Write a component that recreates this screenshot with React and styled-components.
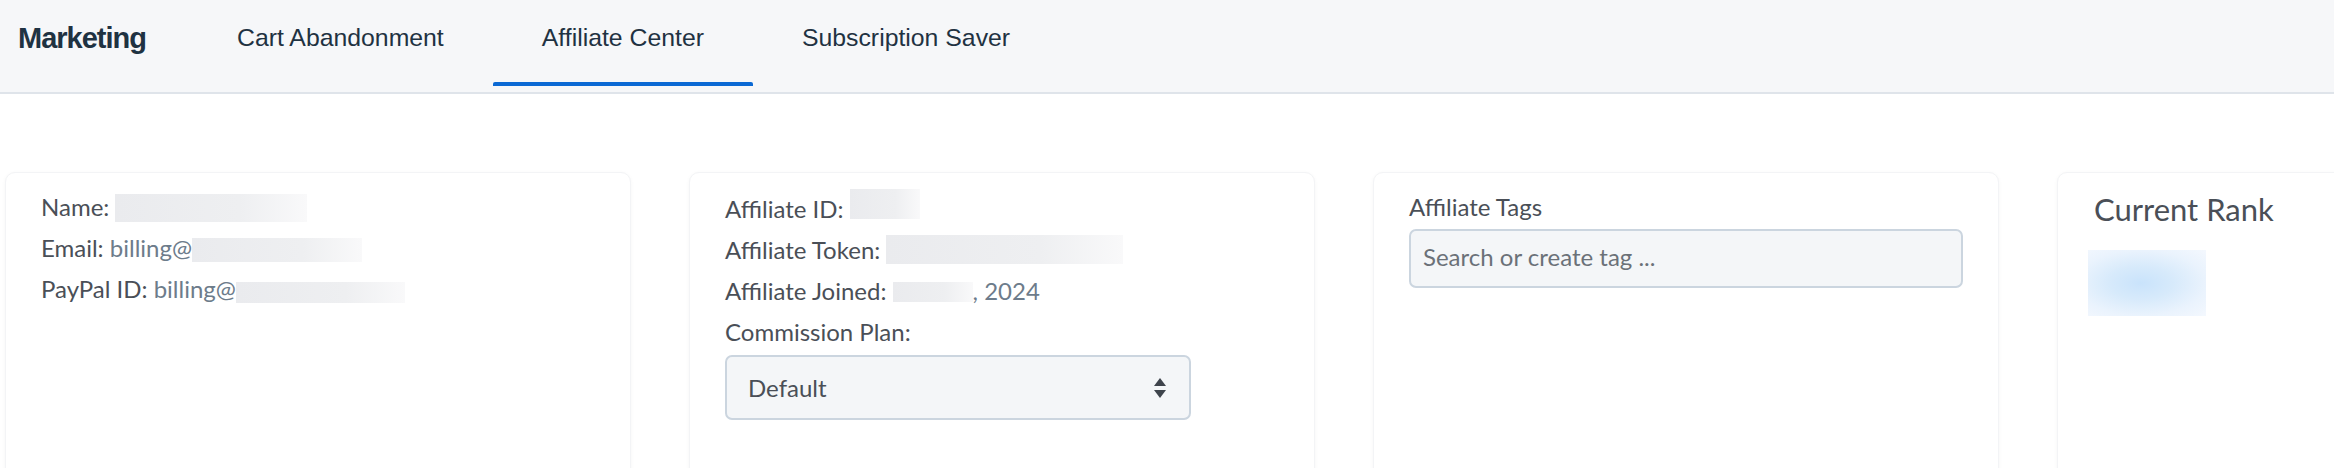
import React from "react";
import styled, { createGlobalStyle } from "styled-components";

const GlobalStyle = createGlobalStyle`
    html, body {
        margin: 0;
        padding: 0;
        background: #ffffff;
        overflow: hidden;
    }
    body {
        font-family: "Lato", "Noto Sans", sans-serif;
        color: #4a4f57;
    }
`;

const Page = styled.div`
    width: 2334px;
    height: 468px;
    overflow: hidden;
`;

const TopBar = styled.div`
    display: flex;
    align-items: stretch;
    height: 92px;
    background: #f6f7f9;
    border-bottom: 2px solid #dfe4ea;
    padding-left: 18px;
`;

const Brand = styled.div`
    display: flex;
    align-items: center;
    font-family: "Liberation Sans", Arial, sans-serif;
    font-weight: 700;
    font-size: 29px;
    letter-spacing: -1px;
    color: #1f3242;
    margin-right: 42px;
    padding-bottom: 16px;
`;

const Tab = styled.div`
    position: relative;
    display: flex;
    align-items: center;
    padding: 0 49px 16px;
    font-family: "Liberation Sans", Arial, sans-serif;
    font-size: 24.8px;
    color: #1f3242;

    &::after {
        content: "";
        position: absolute;
        left: 0;
        right: 0;
        bottom: 6px;
        height: 4px;
        border-radius: 2px 2px 0 0;
        background: ${(p) => (p.$active ? "#0b69d4" : "transparent")};
    }
`;

const CardRow = styled.div`
    display: flex;
    gap: 58px;
    padding: 78px 0 0 5px;
`;

const Card = styled.div`
    flex: 0 0 626px;
    height: 330px;
    box-sizing: border-box;
    padding: 16px 35px;
    background: #ffffff;
    border: 1px solid #f3f4f6;
    border-radius: 10px;
    box-shadow: 0 1px 4px rgba(20, 30, 40, 0.04);
`;

const Line = styled.div`
    font-size: 24px;
    line-height: 36px;
    margin-bottom: 5px;
    color: #4a4f57;
    white-space: nowrap;
`;

const Value = styled.span`
    color: #6d7c8b;
`;

const Redact = styled.span`
    display: inline-block;
    width: ${(p) => p.$w}px;
    height: ${(p) => p.$h || 28}px;
    vertical-align: ${(p) => p.$v || -6}px;
    background: linear-gradient(90deg, #eaebee 0%, #eeeff1 65%, #f9f9fa 100%);
`;

const SelectBox = styled.div`
    display: flex;
    align-items: center;
    justify-content: space-between;
    width: 466px;
    height: 65px;
    box-sizing: border-box;
    padding: 0 22px 0 21px;
    margin-top: 3px;
    background: #f4f6f8;
    border: 2px solid #cbd5df;
    border-radius: 7px;
    font-size: 24px;
    color: #4a4f57;
`;

const TagLabel = styled.div`
    font-size: 24px;
    line-height: 36px;
    color: #4a4f57;
    margin-bottom: 4px;
`;

const TagInput = styled.input`
    display: block;
    width: 100%;
    height: 59px;
    box-sizing: border-box;
    padding: 0 12px 4px;
    background: #f4f6f8;
    border: 2px solid #cbd5df;
    border-radius: 7px;
    font-family: "Lato", "Noto Sans", sans-serif;
    font-size: 24px;
    color: #4a4f57;
    outline: none;

    &::placeholder {
        color: #6b7178;
    }
`;

const RankTitle = styled.div`
    font-size: 31px;
    line-height: 36px;
    color: #4a4f57;
    padding-top: 2px;
    padding-left: 1px;
`;

const RankBadge = styled.div`
    width: 118px;
    height: 66px;
    margin-top: 23px;
    margin-left: -5px;
    background: radial-gradient(
        ellipse at 45% 50%,
        #c9e3fb 0%,
        #d7eafb 35%,
        #eaf3fd 70%,
        #f4f8fe 100%
    );
`;

const SortArrows = () => (
    <svg width="14" height="22" viewBox="0 0 14 22">
        <path d="M7 1 L13 9 L1 9 Z" fill="#3e444c" />
        <path d="M7 21 L13 13 L1 13 Z" fill="#3e444c" />
    </svg>
);

const App = () => {
    return (
        <Page>
            <GlobalStyle />
            <TopBar>
                <Brand>Marketing</Brand>
                <Tab>Cart Abandonment</Tab>
                <Tab $active>Affiliate Center</Tab>
                <Tab>Subscription Saver</Tab>
            </TopBar>

            <CardRow>
                <Card>
                    <Line>
                        Name: <Redact $w={192} $h={28} />
                    </Line>
                    <Line>
                        Email: <Value>billing@</Value>
                        <Redact $w={170} $h={24} $v={-5} />
                    </Line>
                    <Line>
                        PayPal ID: <Value>billing@</Value>
                        <Redact $w={169} $h={21} $v={-5} />
                    </Line>
                </Card>

                <Card>
                    <Line>
                        Affiliate ID: <Redact $w={70} $h={30} $v={-1} />
                    </Line>
                    <Line>
                        Affiliate Token: <Redact $w={237} $h={29} $v={-5} />
                    </Line>
                    <Line>
                        Affiliate Joined: <Redact $w={80} $h={20} $v={-2} />
                        <Value>, 2024</Value>
                    </Line>
                    <Line>Commission Plan:</Line>
                    <SelectBox>
                        <span>Default</span>
                        <SortArrows />
                    </SelectBox>
                </Card>

                <Card>
                    <TagLabel>Affiliate Tags</TagLabel>
                    <TagInput placeholder="Search or create tag ..." />
                </Card>

                <Card>
                    <RankTitle>Current Rank</RankTitle>
                    <RankBadge />
                </Card>
            </CardRow>
        </Page>
    );
};

export default App;
